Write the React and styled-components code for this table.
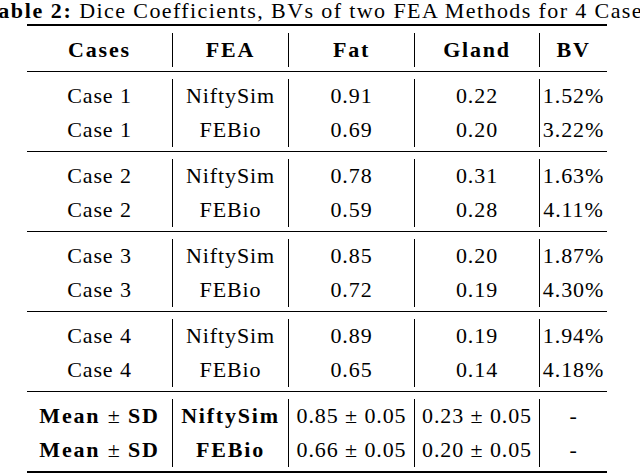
import React from 'react'
import styled, { createGlobalStyle } from 'styled-components';

const serif = `"Liberation Serif", "DejaVu Serif", "Times New Roman", serif`;

const GlobalStyle = createGlobalStyle`
  html, body {
    margin: 0;
    padding: 0;
    background: #fff;
  }
  body {
    font-family: ${serif};
    color: #000;
    overflow: hidden;
  }
`;

const groups = [
    [['Case 1', 'NiftySim', '0.91', '0.22', '1.52%'], ['Case 1', 'FEBio', '0.69', '0.20', '3.22%']],
    [['Case 2', 'NiftySim', '0.78', '0.31', '1.63%'], ['Case 2', 'FEBio', '0.59', '0.28', '4.11%']],
    [['Case 3', 'NiftySim', '0.85', '0.20', '1.87%'], ['Case 3', 'FEBio', '0.72', '0.19', '4.30%']],
    [['Case 4', 'NiftySim', '0.89', '0.19', '1.94%'], ['Case 4', 'FEBio', '0.65', '0.14', '4.18%']],
];

const means = [
    ['NiftySim', '0.85', '0.23'],
    ['FEBio', '0.66', '0.20'],
];

const headers = ['Cases', 'FEA', 'Fat', 'Gland', 'BV'];

const App = () => {
    return (
        <Page>
            <GlobalStyle />
            <Caption>
                <CaptionLabel>Table 2:</CaptionLabel> Dice Coefficients, BVs of two FEA Methods for 4 Cases
            </Caption>
            <Table>
                <Rule $thick />
                <Group>
                    {headers.map((h) => (
                        <Cell key={h} $bold>{h}</Cell>
                    ))}
                </Group>
                <Rule />
                {groups.map((rows, gi) => (
                    <React.Fragment key={gi}>
                        <Group>
                            {rows.map((row) =>
                                row.map((v, ci) => <Cell key={row[1] + ci}>{v}</Cell>)
                            )}
                        </Group>
                        <Rule />
                    </React.Fragment>
                ))}
                <Group>
                    {means.map(([fea, fat, gland]) => (
                        <React.Fragment key={fea}>
                            <Cell $bold>Mean <Pm>±</Pm> SD</Cell>
                            <Cell $bold>{fea}</Cell>
                            <Cell>{fat} ± 0.05</Cell>
                            <Cell>{gland} ± 0.05</Cell>
                            <Cell>-</Cell>
                        </React.Fragment>
                    ))}
                </Group>
                <Rule $thick />
            </Table>
        </Page>
    );
};

export default App;


const Page = styled.div`
  width: 640px;
  height: 473px;
  overflow: hidden;
  font-family: ${serif};
`;

const Caption = styled.div`
  height: 24px;
  margin-left: -16px;
  font-family: ${serif};
  font-size: 22px;
  line-height: 21px;
  letter-spacing: 1.4px;
  white-space: nowrap;
`;

const CaptionLabel = styled.span`
  font-weight: bold;
  letter-spacing: 1.6px;
`;

const Table = styled.div`
  margin-left: 27px;
  width: 580px;
`;

const Rule = styled.div`
  height: ${(p) => (p.$thick ? '2px' : '1px')};
  background: #000;
`;

const Group = styled.div`
  display: grid;
  grid-template-columns: 145px 116px 126px 125px 68px;
  padding: 7px 0 4px;
`;

const Cell = styled.div`
  height: 34px;
  display: flex;
  align-items: center;
  justify-content: center;
  white-space: pre;
  font-family: ${serif};
  font-size: 22px;
  font-weight: ${(p) => (p.$bold ? 'bold' : 'normal')};
  letter-spacing: ${(p) => (p.$bold ? '1.8px' : '0.9px')};

  &:not(:nth-child(5n+1)) {
    border-left: 1px solid #000;
  }
`;

const Pm = styled.span`
  font-weight: normal;
  letter-spacing: 0.9px;
`;
